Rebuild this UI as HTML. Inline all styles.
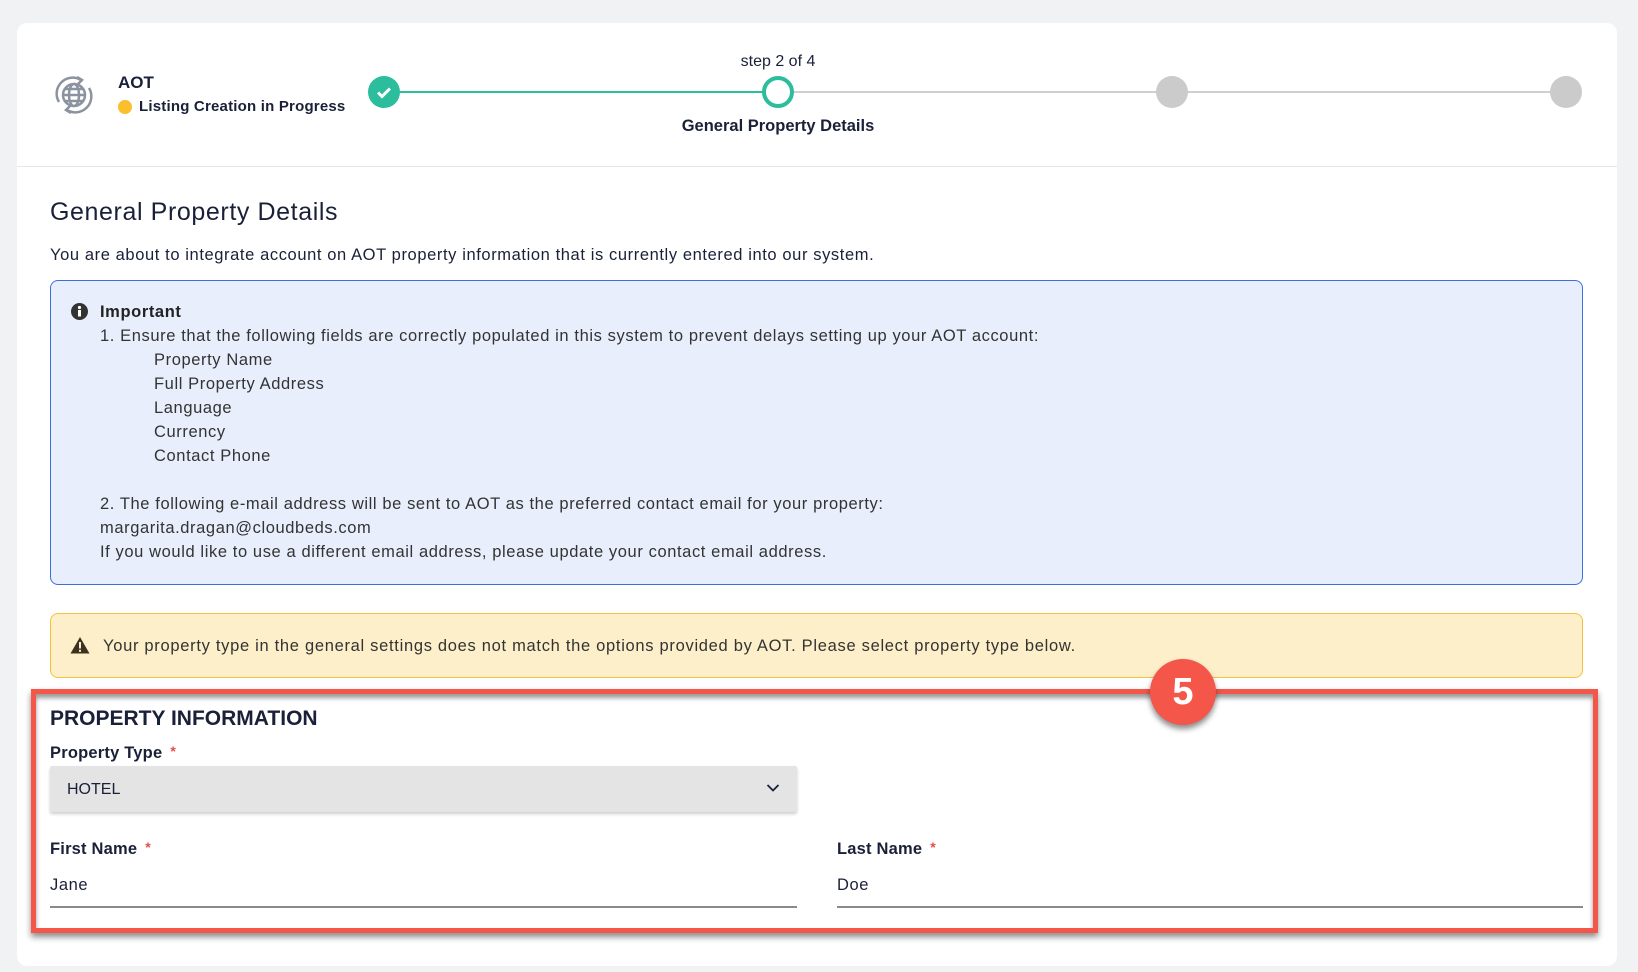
<!DOCTYPE html>
<html><head><meta charset="utf-8"><style>
*{box-sizing:border-box;margin:0;padding:0}
body{width:1638px;height:972px;background:#f1f2f4;font-family:"Liberation Sans",sans-serif;color:#1a2038;position:relative;overflow:hidden}
.card{position:absolute;left:17px;top:23px;width:1600px;height:943px;background:#fff;border-radius:10px}
.abs{position:absolute;white-space:nowrap}
.ls{letter-spacing:0.6px}
.hdiv{position:absolute;left:17px;top:166px;width:1600px;height:1px;background:#e6e7ea}
.line{position:absolute;height:2px;top:91px}
.dot{position:absolute;width:32px;height:32px;border-radius:50%;top:76px}
.blue{position:absolute;left:50px;top:280px;width:1533px;height:305px;background:#e8eefc;border:1px solid #3b6fe0;border-radius:8px}
.blue div{position:absolute;white-space:nowrap;font-size:16.5px;color:#333;letter-spacing:0.6px}
.yel{position:absolute;left:50px;top:613px;width:1533px;height:65px;background:#fdefc9;border:1px solid #f5c23a;border-radius:8px}
.red{position:absolute;left:31px;top:689px;width:1567px;height:244px;border:5px solid #f4564a;box-shadow:0 4px 6px rgba(0,0,0,.45), inset 0 4px 5px rgba(0,0,0,.4)}
.lbl{font-size:16.5px;font-weight:bold;letter-spacing:0.2px}
.star{color:#e84a4a;font-size:14px;margin-left:8px;vertical-align:2px}
</style></head><body>
<div class="card"></div>
<div class="hdiv"></div>
<svg class="abs" style="left:51px;top:72px" width="46" height="46" viewBox="0 0 46 46" fill="none" stroke="#8c93a0" stroke-width="2.5">
<circle cx="23" cy="23" r="11"/><ellipse cx="23" cy="23" rx="5" ry="11"/><line x1="12" y1="23" x2="34" y2="23"/><line x1="13.5" y1="17" x2="32.5" y2="17"/><line x1="13.5" y1="29" x2="32.5" y2="29"/>
<path d="M8 30 A16 16 0 0 1 30 8"/><path d="M38 16 A16 16 0 0 1 16 38"/><path d="M26 5 l5 3 -4 4"/><path d="M20 41 l-5 -3 4 -4"/></svg>
<div class="abs" style="left:118px;top:73px;font-size:17px;font-weight:bold">AOT</div>
<div class="abs" style="left:118px;top:100px;width:14px;height:14px;border-radius:50%;background:#fbbf2d"></div>
<div class="abs" style="left:139px;top:98px;font-size:15px;font-weight:bold;letter-spacing:0.2px">Listing Creation in Progress</div>
<div class="line" style="left:400px;width:378px;background:#2bbd9c"></div>
<div class="line" style="left:778px;width:788px;background:#cfcfcf"></div>
<div class="dot" style="left:368px;background:#2bbd9c"><svg width="32" height="32"><path d="M10 16.5l4 4 8-8" stroke="#fff" stroke-width="3" fill="none"/></svg></div>
<div class="dot" style="left:762px;background:#fff;border:4px solid #2bbd9c"></div>
<div class="dot" style="left:1156px;background:#cbcbcb"></div>
<div class="dot" style="left:1550px;background:#cbcbcb"></div>
<div class="abs" style="left:678px;top:53px;width:200px;text-align:center;font-size:16px">step 2 of 4</div>
<div class="abs" style="left:628px;top:117px;width:300px;text-align:center;font-size:16.5px;font-weight:bold">General Property Details</div>
<div class="abs ls" style="left:50px;top:198px;font-size:25px">General Property Details</div>
<div class="abs ls" style="left:50px;top:246px;font-size:16.5px">You are about to integrate account on AOT property information that is currently entered into our system.</div>
<div class="blue">
<svg style="position:absolute;left:20px;top:22px" width="17" height="17"><circle cx="8.5" cy="8.5" r="8.5" fill="#333"/><circle cx="8.5" cy="4.5" r="1.6" fill="#fff"/><rect x="7" y="7" width="3" height="6.5" fill="#fff"/></svg>
<div style="left:49px;top:22px;font-weight:bold;color:#222">Important</div>
<div style="left:49px;top:46px">1. Ensure that the following fields are correctly populated in this system to prevent delays setting up your AOT account:</div>
<div style="left:103px;top:70px">Property Name</div>
<div style="left:103px;top:94px">Full Property Address</div>
<div style="left:103px;top:118px">Language</div>
<div style="left:103px;top:142px">Currency</div>
<div style="left:103px;top:166px">Contact Phone</div>
<div style="left:49px;top:214px">2. The following e-mail address will be sent to AOT as the preferred contact email for your property:</div>
<div style="left:49px;top:238px">margarita.dragan@cloudbeds.com</div>
<div style="left:49px;top:262px">If you would like to use a different email address, please update your contact email address.</div>
</div>
<div class="yel">
<svg style="position:absolute;left:19px;top:22px" width="20" height="18"><path d="M10 1L19.5 17.5H0.5Z" fill="#3a3320"/><rect x="9" y="6" width="2" height="6.5" fill="#fdefc9"/><rect x="9" y="13.8" width="2" height="2" fill="#fdefc9"/></svg>
<div class="abs ls" style="left:52px;top:23px;font-size:16.5px;color:#333;letter-spacing:0.7px">Your property type in the general settings does not match the options provided by AOT. Please select property type below.</div>
</div>
<div class="red"></div>
<div class="abs" style="left:1150px;top:659px;width:66px;height:66px;border-radius:50%;background:#f4564a;box-shadow:0 4px 6px rgba(0,0,0,.45);color:#fff;font-size:38px;font-weight:bold;text-align:center;line-height:66px">5</div>
<div class="abs" style="left:50px;top:707px;font-size:21px;font-weight:bold">PROPERTY INFORMATION</div>
<div class="abs lbl" style="left:50px;top:743px">Property Type<span class="star">*</span></div>
<div class="abs" style="left:50px;top:766px;width:747px;height:46px;background:#e4e4e4;box-shadow:0 2px 3px rgba(0,0,0,.2);border-radius:2px"><span style="position:absolute;left:17px;top:15px;font-size:16px">HOTEL</span><svg style="position:absolute;right:17px;top:17px" width="14" height="10"><path d="M1.5 2l5.5 5.5 5.5-5.5" stroke="#1a2038" stroke-width="1.8" fill="none"/></svg></div>
<div class="abs lbl" style="left:50px;top:839px">First Name<span class="star">*</span></div>
<div class="abs lbl" style="left:837px;top:839px">Last Name<span class="star">*</span></div>
<div class="abs ls" style="left:50px;top:876px;font-size:16.5px">Jane</div>
<div class="abs ls" style="left:837px;top:876px;font-size:16.5px">Doe</div>
<div class="abs" style="left:50px;top:906px;width:747px;height:2px;background:#8a8a8a"></div>
<div class="abs" style="left:837px;top:906px;width:746px;height:2px;background:#8a8a8a"></div>
</body></html>
